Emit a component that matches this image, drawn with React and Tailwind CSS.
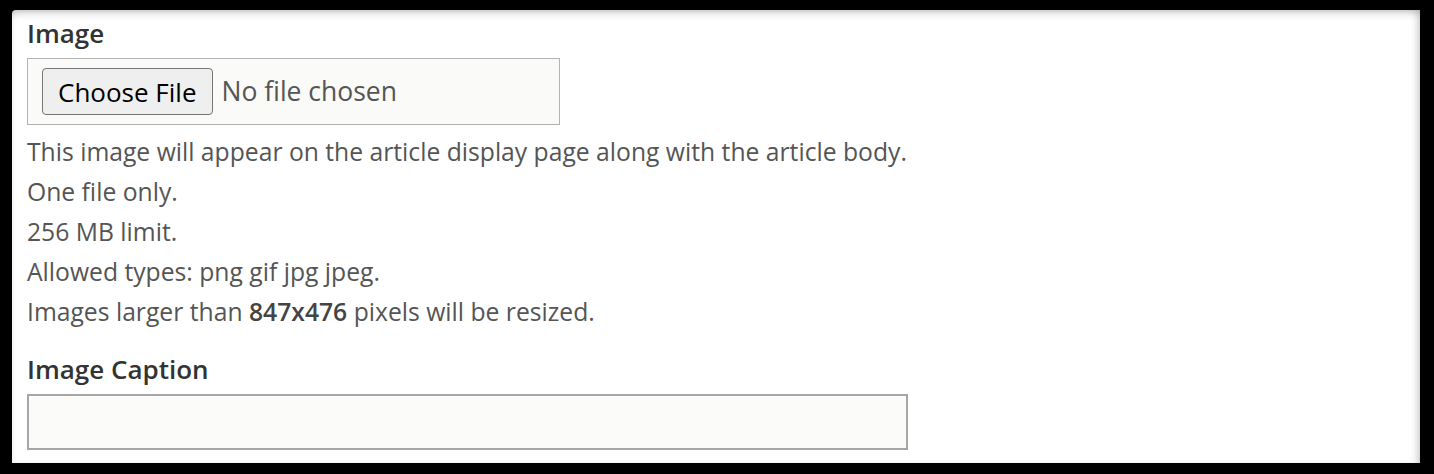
export default function App() {
    return (
        <div className="w-[1434px] h-[474px] bg-black pt-[10px] pl-[12px] pr-[14px] pb-[11px]" style={{ fontFamily: '"Open Sans", sans-serif' }}>
            <div className="h-full bg-white rounded-tl-[4px] shadow-[inset_0_6px_8px_-4px_rgba(0,0,0,0.25),inset_-6px_0_8px_-4px_rgba(0,0,0,0.2)] pl-[15px] pt-[8px]">

                {/* Image upload */}
                <p className="text-[26px] leading-[30px] font-semibold text-[#333]">Image</p>
                <div className="mt-[10px] w-[533px] h-[67px] border border-[#b3b3b3] bg-[#fafaf8] flex items-center pl-[14px] gap-[9px]">
                    <button className="h-[47px] px-[15px] rounded-[4px] border border-[#767676] bg-[#efefef] text-[26px] leading-[30px] text-black">
                        Choose File
                    </button>
                    <span className="text-[26.5px] text-[#555]">No file chosen</span>
                </div>

                <div className="mt-[7px] text-[24.7px] leading-[40px] text-[#555]">
                    <p>This image will appear on the article display page along with the article body.</p>
                    <p>One file only.</p>
                    <p>256 MB limit.</p>
                    <p>Allowed types: png gif jpg jpeg.</p>
                    <p>Images larger than <strong className="font-semibold text-[#444]">847x476</strong> pixels will be resized.</p>
                </div>

                {/* Caption */}
                <p className="mt-[22px] text-[26px] leading-[30px] font-semibold text-[#333]">Image Caption</p>
                <div className="mt-[10px] w-[881px] h-[56px] border-2 border-[#a6a6a6] bg-[#fbfbf9]"></div>
            </div>
        </div>
    )
}
